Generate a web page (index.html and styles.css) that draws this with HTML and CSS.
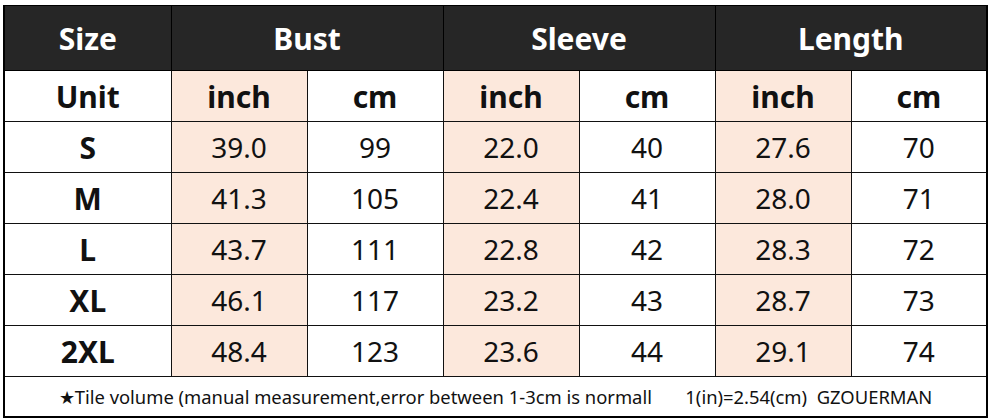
FILE: index.html
```html
<!DOCTYPE html>
<html lang="en">

<head>
    <meta charset="UTF-8">
    <title>Size chart</title>
    <link rel="stylesheet" href="styles.css">
</head>

<body>
    <table class="chart">
        <colgroup>
            <col class="c-size">
            <col class="c-val">
            <col class="c-val">
            <col class="c-val">
            <col class="c-val">
            <col class="c-val">
            <col class="c-val">
        </colgroup>
        <tr class="head">
            <th>Size</th>
            <th colspan="2">Bust</th>
            <th colspan="2">Sleeve</th>
            <th colspan="2">Length</th>
        </tr>
        <tr class="unit">
            <th>Unit</th>
            <th class="in">inch</th>
            <th>cm</th>
            <th class="in">inch</th>
            <th>cm</th>
            <th class="in">inch</th>
            <th>cm</th>
        </tr>
        <tr>
            <th>S</th>
            <td class="in">39.0</td><td>99</td>
            <td class="in">22.0</td><td>40</td>
            <td class="in">27.6</td><td>70</td>
        </tr>
        <tr>
            <th>M</th>
            <td class="in">41.3</td><td>105</td>
            <td class="in">22.4</td><td>41</td>
            <td class="in">28.0</td><td>71</td>
        </tr>
        <tr>
            <th>L</th>
            <td class="in">43.7</td><td>111</td>
            <td class="in">22.8</td><td>42</td>
            <td class="in">28.3</td><td>72</td>
        </tr>
        <tr>
            <th>XL</th>
            <td class="in">46.1</td><td>117</td>
            <td class="in">23.2</td><td>43</td>
            <td class="in">28.7</td><td>73</td>
        </tr>
        <tr>
            <th>2XL</th>
            <td class="in">48.4</td><td>123</td>
            <td class="in">23.6</td><td>44</td>
            <td class="in">29.1</td><td>74</td>
        </tr>
        <tr class="note">
            <td colspan="7">★Tile volume (manual measurement,error between 1-3cm is normall&nbsp;&nbsp;&nbsp;&nbsp;&nbsp;&nbsp;&nbsp;1(in)=2.54(cm)&nbsp;&nbsp;GZOUERMAN</td>
        </tr>
    </table>
</body></html>
```

FILE: styles.css
```css
body {
    margin: 0;
    padding: 5px 0 0 3px;
    background-color: #fff;
    font-family: "Noto Sans", "Open Sans", sans-serif;
    color: #111;
}

.chart {
    border-collapse: collapse;
    table-layout: fixed;
    width: 984px;
    border-left: 2px solid #000;
    border-right: 2px solid #000;
    border-top: 1px solid #000;
    border-bottom: 2px solid #000;
}

.c-size {
    width: 167px;
}

.c-val {
    width: 136px;
}

th,
td {
    border: 1px solid #111;
    text-align: center;
    padding: 0;
    height: 50px;
    font-size: 28px;
}

th {
    font-weight: 700;
    font-size: 30px;
}

td {
    font-weight: 400;
}

.head th {
    background-color: #262626;
    color: #fff;
    height: 64px;
    border-color: #000;
}

.in {
    background-color: #fce8dc;
}

.note td {
    height: 39px;
    font-size: 18.4px;
    color: #111;
}
```
